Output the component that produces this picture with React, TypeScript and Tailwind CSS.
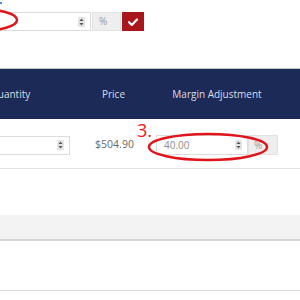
import React from 'react';

function Spinner() {
  return (
    <svg width="7" height="10" viewBox="0 0 7 10" className="shrink-0">
      <rect x="0" y="0" width="7" height="10" rx="1" fill="#e4e4e4" />
      <path d="M3.5 1.5 L5.5 4 L1.5 4 Z" fill="#555" />
      <path d="M3.5 8.5 L5.5 6 L1.5 6 Z" fill="#555" />
    </svg>
  );
}

function NumberBox({ value, className }: { value?: string; className: string }) {
  return (
    <div className={`flex items-center justify-between border border-[#dcdcdc] bg-white pl-[7px] pr-[5px] ${className}`}>
      <span className="text-[10px] text-[#8a8a8a]">{value}</span>
      <Spinner />
    </div>
  );
}

export default function App() {
  return (
    <div
      className="relative w-[300px] h-[300px] overflow-hidden bg-white"
      style={{ fontFamily: '"Open Sans", "Liberation Sans", sans-serif' }}
    >
      {/* Top input group */}
      <div className="flex items-stretch h-[19px] mt-[12px] -ml-[30px]">
        <NumberBox className="w-[121px] h-[19px]" />
        <div className="w-[29px] ml-[1px] bg-[#eeeeee] border border-[#e2e2e2] flex items-center pl-[6px] text-[10px] text-[#999]">%</div>
        <button className="w-[22px] ml-[1px] bg-[#a9161c] flex items-center justify-center">
          <svg width="10" height="8" viewBox="0 0 10 8">
            <path d="M1 4.2 L3.8 7 L9 1.5" stroke="#fff" strokeWidth="2.2" fill="none" strokeLinecap="round" strokeLinejoin="round" />
          </svg>
        </button>
      </div>

      {/* Table */}
      <div className="mt-[37px] border-t border-[#c8c8c8]">
        <div className="grid grid-cols-[95px_75px_134px] h-[50px] bg-[#1c2a57] -ml-[20px] items-center text-[10px] text-[#d9dde8]">
          <div className="pl-[10px]">Quantity</div>
          <div className="text-center pl-[2px]">Price</div>
          <div className="text-center">Margin Adjustment</div>
        </div>
        <div className="grid grid-cols-[95px_75px_134px] h-[50px] -ml-[20px] items-center border-b border-[#e2e2e2] text-[10.5px] text-[#6a6a6a]">
          <div className="pt-[3px]">
            <NumberBox className="w-[90px] h-[19px]" />
          </div>
          <div className="text-center pt-[3px] pl-[4px]">$504.90</div>
          <div className="flex pt-[3px] pl-[6px]">
            <NumberBox value="40.00" className="w-[92px] h-[20px]" />
            <div className="w-[30px] h-[20px] bg-[#eeeeee] border border-[#e2e2e2] flex items-center pl-[5px] text-[10px] text-[#999]">%</div>
          </div>
        </div>
      </div>

      <div className="mt-[46px] h-[26px] bg-[#f3f3f3] border-b-2 border-[#d6d6d6]" />
      <div className="mt-[49px] border-b border-[#dadada]" />

      {/* Annotations */}
      <svg className="absolute left-0 top-0 pointer-events-none" width="300" height="300">
        <ellipse cx="-20" cy="20" rx="37" ry="11" stroke="#e0141b" strokeWidth="2.5" fill="none" />
        <ellipse cx="208" cy="147" rx="59" ry="13" stroke="#e0141b" strokeWidth="2.5" fill="none" />
      </svg>
      <div className="absolute left-[137px] top-[121px] text-[18px] text-[#f0141b] leading-none">3.</div>
      <div className="absolute left-0 top-[2px] w-[2px] h-[2px] bg-[#4a90d9]" />
    </div>
  );
}
